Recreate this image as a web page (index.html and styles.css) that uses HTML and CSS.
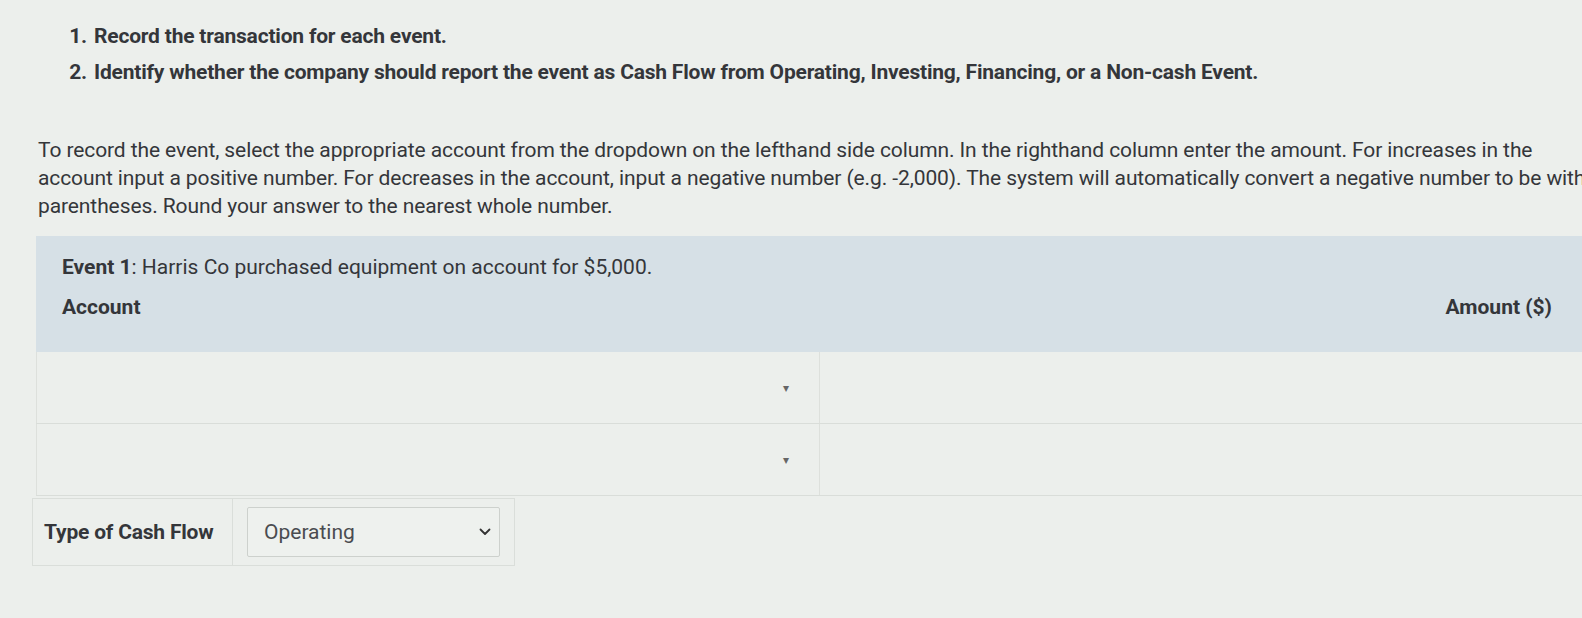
FILE: index.html
```html
<!DOCTYPE html>
<html lang="en">
<head>
<meta charset="utf-8">
<title>Event 1</title>
<link rel="stylesheet" href="styles.css">
</head>
<body>
<div class="page">
  <ol class="steps">
    <li>Record the transaction for each event.</li>
    <li>Identify whether the company should report the event as Cash Flow from Operating, Investing, Financing, or a Non-cash Event.</li>
  </ol>
  <p class="instructions">To record the event, select the appropriate account from the dropdown on the lefthand side column. In the righthand column enter the amount. For increases in the<br>account input a positive number. For decreases in the account, input a negative number (e.g. -2,000). The system will automatically convert a negative number to be within<br>parentheses. Round your answer to the nearest whole number.</p>

  <section class="event">
    <div class="event-head">
      <div class="event-title"><strong>Event 1</strong>: Harris Co purchased equipment on account for $5,000.</div>
      <div class="col-heads">
        <span class="col-account">Account</span>
        <span class="col-amount">Amount ($)</span>
      </div>
    </div>
    <div class="entry-row">
      <div class="cell-account"><span class="caret">&#9662;</span></div>
      <div class="cell-amount"></div>
    </div>
    <div class="entry-row">
      <div class="cell-account"><span class="caret">&#9662;</span></div>
      <div class="cell-amount"></div>
    </div>
  </section>

  <div class="cashflow">
    <div class="cf-label">Type of Cash Flow</div>
    <div class="cf-field">
      <div class="select">
        <span>Operating</span>
        <svg class="chev" width="12" height="8" viewBox="0 0 12 8"><path d="M1.5 1.5 L6 6 L10.5 1.5" fill="none" stroke="#333" stroke-width="1.8" stroke-linecap="round" stroke-linejoin="round"/></svg>
      </div>
    </div>
  </div>
</div>
</body>
</html>
```
FILE: styles.css
```css
html, body {
  margin: 0;
  padding: 0;
  overflow: hidden;
  background: #ecefec;
}
body {
  font-family: Roboto, "Liberation Sans", Arial, sans-serif;
  color: #34363a;
  font-size: 21px;
}
.page {
  width: 1700px;
  padding: 0 0 0 36px;
}
.steps {
  margin: 0;
  padding: 18px 0 0 56px;
  font-weight: 700;
  line-height: 36px;
  letter-spacing: -0.2px;
}
.steps li {
  padding-left: 2px;
}
.instructions {
  margin: 46px 0 0 2px;
  line-height: 28px;
  white-space: nowrap;
  letter-spacing: -0.1px;
}
.event {
  margin-top: 16px;
}
.event-head {
  background: #d6e0e6;
  padding: 16px 28px 0 26px;
  height: 116px;
  box-sizing: border-box;
}
.event-title {
  line-height: 30px;
}
.event-title strong {
  font-weight: 700;
}
.col-heads {
  display: flex;
  justify-content: space-between;
  margin-top: 12px;
  width: 1490px;
  font-weight: 700;
  line-height: 26px;
}
.entry-row {
  display: flex;
  height: 72px;
  border-bottom: 1px solid #d9ddd9;
  box-sizing: border-box;
}
.cell-account {
  width: 784px;
  border-left: 1px solid #dde0dc;
  border-right: 1px solid #dde0dc;
  display: flex;
  align-items: center;
  justify-content: flex-end;
  padding-right: 30px;
  box-sizing: border-box;
}
.caret {
  font-size: 12px;
  color: #666;
}
.cell-amount {
  flex: 1;
}
.cashflow {
  display: flex;
  width: 483px;
  height: 68px;
  margin: 2px 0 0 -4px;
  border: 1px solid #dadeda;
  box-sizing: border-box;
}
.cf-label {
  width: 200px;
  display: flex;
  align-items: center;
  padding-left: 11px;
  box-sizing: border-box;
  font-weight: 700;
  border-right: 1px solid #dadeda;
  letter-spacing: -0.2px;
}
.cf-field {
  flex: 1;
  display: flex;
  align-items: center;
  padding: 0 14px;
}
.select {
  flex: 1;
  height: 48px;
  border: 1px solid #cdd1cd;
  border-radius: 2px;
  background: #eef1ee;
  display: flex;
  align-items: center;
  justify-content: space-between;
  padding: 0 8px 0 16px;
  color: #4a4c50;
}
.chev {
  display: block;
}
```
